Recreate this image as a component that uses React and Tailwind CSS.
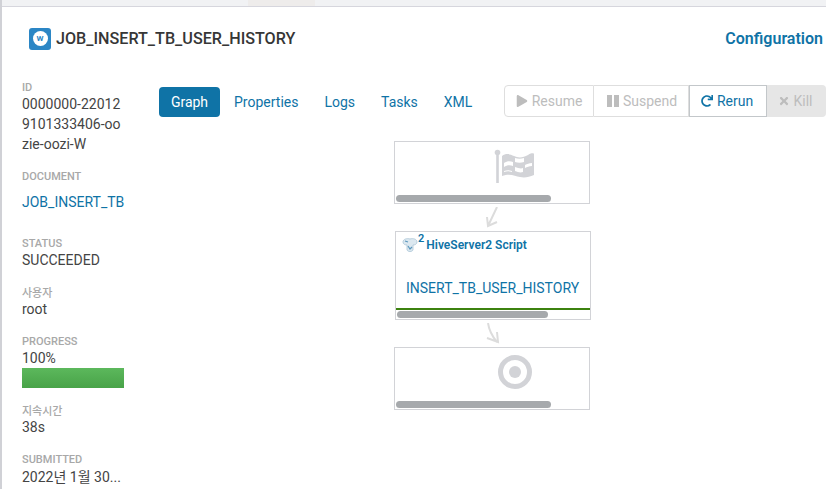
import React from "react";
import { FaPlay, FaRedo, FaTimes } from "react-icons/fa";

const Label = ({ children }) => (
  <div className="mb-[-2px] text-[11px] leading-[16px] font-medium text-[#a8a8a8]">{children}</div>
);

const Field = ({ label, className, valueClass, children }) => (
  <div className={className}>
    <Label>{label}</Label>
    <div className={`text-[14px] leading-[20px] text-[#444] ${valueClass || ""}`}>{children}</div>
  </div>
);

const ScrollBar = () => <div className="h-[7px] w-[155px] rounded-full bg-[#a6a9ac]" />;

const FlagIcon = () => (
  <svg width="42" height="36" viewBox="0 0 42 36">
    <circle cx="3.5" cy="3.5" r="2.8" fill="#d2d3d7" />
    <rect x="2.2" y="5" width="2.6" height="29" fill="#d2d3d7" />
    <path d="M8 7c4-3 8-2 12 0s9 2 14-1 6-1 6-1v21c-5 2-9 3-14 2s-10-4-18-1z" fill="#d2d3d7" />
    <path d="M10 14c3-2 6-2 9-1v4c-3-1-6-1-9 1zM21 9c3 1 6 1 9 0v4c-3 1-6 1-9 0zM31 16c2-1 4-2 7-2v3c-3 0-5 1-7 2zM21 18c3 1 6 2 8 1v4c-3 1-5 0-8-1zM10 23c3-1 5-1 8 0v-1c-3-1-5-1-8 0z" fill="#fff" />
  </svg>
);

const TargetIcon = () => (
  <svg width="36" height="36" viewBox="0 0 36 36">
    <circle cx="18" cy="18" r="14.5" fill="none" stroke="#d2d3d7" strokeWidth="5" />
    <circle cx="18" cy="18" r="6" fill="#d2d3d7" />
  </svg>
);

const HiveIcon = () => (
  <svg width="16" height="16" viewBox="0 0 16 16">
    <path d="M1 5c0-3 4-4 7-3 3-1 7 0 7 3 0 2-2 3-4 3v5c-1 2-5 2-6 0V8C3 8 1 7 1 5z" fill="#dce8f0" stroke="#a9c4d6" strokeWidth="0.8" />
    <path d="M6 9l2 3 2-2M3 4l3 1" fill="none" stroke="#5b97bd" strokeWidth="1.2" />
  </svg>
);

const PauseIcon = () => (
  <div className="flex gap-[2px]">
    <div className="h-[12px] w-[5px] bg-[#bdbdbd]" />
    <div className="h-[12px] w-[5px] bg-[#bdbdbd]" />
  </div>
);

const ActionButton = ({ icon, label, className }) => (
  <div className={`flex h-[32px] items-center justify-center gap-[4px] text-[14px] ${className}`}>
    {icon}
    {label}
  </div>
);

const App = () => {
  return (
    <div className="h-[489px] w-[826px] overflow-hidden border-l-2 border-[#d0d1d6] bg-white font-['Roboto','Noto_Sans_CJK_KR',sans-serif]">
      <div className="flex h-[7px] border-b border-[#d6d6dd] bg-[#f1f2f4]">
        <div className="w-[246px]" />
        <div className="w-[67px] bg-[#eeeceb]" />
      </div>

      <div className="flex h-[50px] items-center justify-between pl-[27px] pr-[3px] pt-[14px]">
        <div className="flex items-center gap-[5px]">
          <div className="flex h-[22px] w-[22px] items-center justify-center rounded-[3px] bg-[#2b86c5]">
            <div className="flex h-[15px] w-[15px] items-center justify-center rounded-full bg-white text-[8px] font-bold text-[#2b86c5]">
              W
            </div>
          </div>
          <div className="text-[16.15px] font-medium text-[#363636]">JOB_INSERT_TB_USER_HISTORY</div>
        </div>
        <div className="text-[16px] font-semibold text-[#0f73a6]">Configuration</div>
      </div>

      <div className="flex">
        <div className="ml-[20px] w-[102px] shrink-0 pt-[23px]">
          <Field label="ID">
            <div className="break-all">0000000-220129101333406-oozie-oozi-W</div>
          </Field>
          <div className="mt-[15px]">
            <Label>DOCUMENT</Label>
            <div className="mt-[9px] text-[14px] leading-[20px] text-[#0f73a6]">JOB_INSERT_TB</div>
          </div>
          <Field label="STATUS" className="mt-[24px]">SUCCEEDED</Field>
          <Field label="사용자" className="mt-[16px]" valueClass="mt-[-3px]">root</Field>
          <Field label="PROGRESS" className="mt-[15px]" valueClass="mt-[-1px]">
            100%
            <div className="h-[20px] w-[102px] bg-gradient-to-b from-[#5cb85c] to-[#48a348]" />
          </Field>
          <Field label="지속시간" className="mt-[16px]" valueClass="mt-[-3px]">38s</Field>
          <Field label="SUBMITTED" className="mt-[15px]" valueClass="mt-[1px]">2022년 1월 30...</Field>
        </div>

        <div className="flex-1 pl-[35px] pt-[28px]">
          <div className="flex items-start justify-between">
            <div className="mt-[2px] flex items-center text-[14px] text-[#0f73a6]">
              <div className="flex h-[30px] w-[61px] items-center justify-center rounded-[4px] bg-[#0f73a6] text-white">Graph</div>
              <div className="ml-[14px]">Properties</div>
              <div className="ml-[26px]">Logs</div>
              <div className="ml-[26px]">Tasks</div>
              <div className="ml-[26px]">XML</div>
            </div>
            <div className="flex">
              <ActionButton
                icon={<FaPlay size={12} />}
                label="Resume"
                className="w-[90px] rounded-l-[4px] border border-[#dedede] text-[#bdbdbd]"
              />
              <ActionButton
                icon={<PauseIcon />}
                label="Suspend"
                className="w-[95px] border-y border-r border-[#dedede] pl-[2px] text-[#bdbdbd]"
              />
              <ActionButton
                icon={<FaRedo size={12} className="text-[#0f73a6]" />}
                label="Rerun"
                className="w-[78px] border border-[#c3c7ca] pr-[2px] text-[#0f73a6]"
              />
              <ActionButton
                icon={<FaTimes size={12} />}
                label="Kill"
                className="w-[59px] rounded-r-[4px] bg-[#e6e6e6] pr-[3px] text-[#bdbdbd]"
              />
            </div>
          </div>

          <div className="ml-[235px] mt-[24px] w-[196px]">
            <div className="flex h-[63px] flex-col border border-[#d2d3d7] px-[1px] pb-[1px]">
              <div className="flex flex-1 justify-center pl-[46px] pt-[7px]">
                <FlagIcon />
              </div>
              <ScrollBar />
            </div>
            <div className="flex h-[27px] items-center pl-[88px]">
              <svg width="18" height="22" viewBox="0 0 18 22" fill="none" stroke="#dcdcdc" strokeWidth="2">
                <path d="M15 0 6 19M5 10l1 9 9-4" />
              </svg>
            </div>
            <div className="ml-[1px] mr-[-1px] flex h-[89px] flex-col border border-[#d2d3d7]">
              <div className="flex h-[22px] items-center pl-[6px] pt-[3px] text-[12px] font-semibold text-[#0f73a6]">
                <HiveIcon />
                <sup className="mr-[2px] text-[11px] text-[#0f73a6]">2</sup>
                HiveServer2 Script
              </div>
              <div className="flex flex-1 items-center pl-[10px] pt-[14px] text-[14px] text-[#0f73a6]">INSERT_TB_USER_HISTORY</div>
              <div className="h-[2px] bg-[#3c820f]" />
              <div className="flex h-[9px] items-center pl-[1px]">
                <div className="h-[7px] w-[151px] rounded-full bg-[#a6a9ac]" />
              </div>
            </div>
            <div className="flex h-[27px] items-center pl-[90px]">
              <svg width="18" height="22" viewBox="0 0 18 22" fill="none" stroke="#dcdcdc" strokeWidth="2">
                <path d="M4 0c1 7 4 13 9 19M3 15l11 4-1-10" />
              </svg>
            </div>
            <div className="flex h-[63px] flex-col border border-[#d2d3d7] px-[1px] pb-[1px]">
              <div className="flex flex-1 justify-center pl-[46px] pt-[6px]">
                <TargetIcon />
              </div>
              <ScrollBar />
            </div>
          </div>
        </div>
      </div>
    </div>
  );
};

export default App;
